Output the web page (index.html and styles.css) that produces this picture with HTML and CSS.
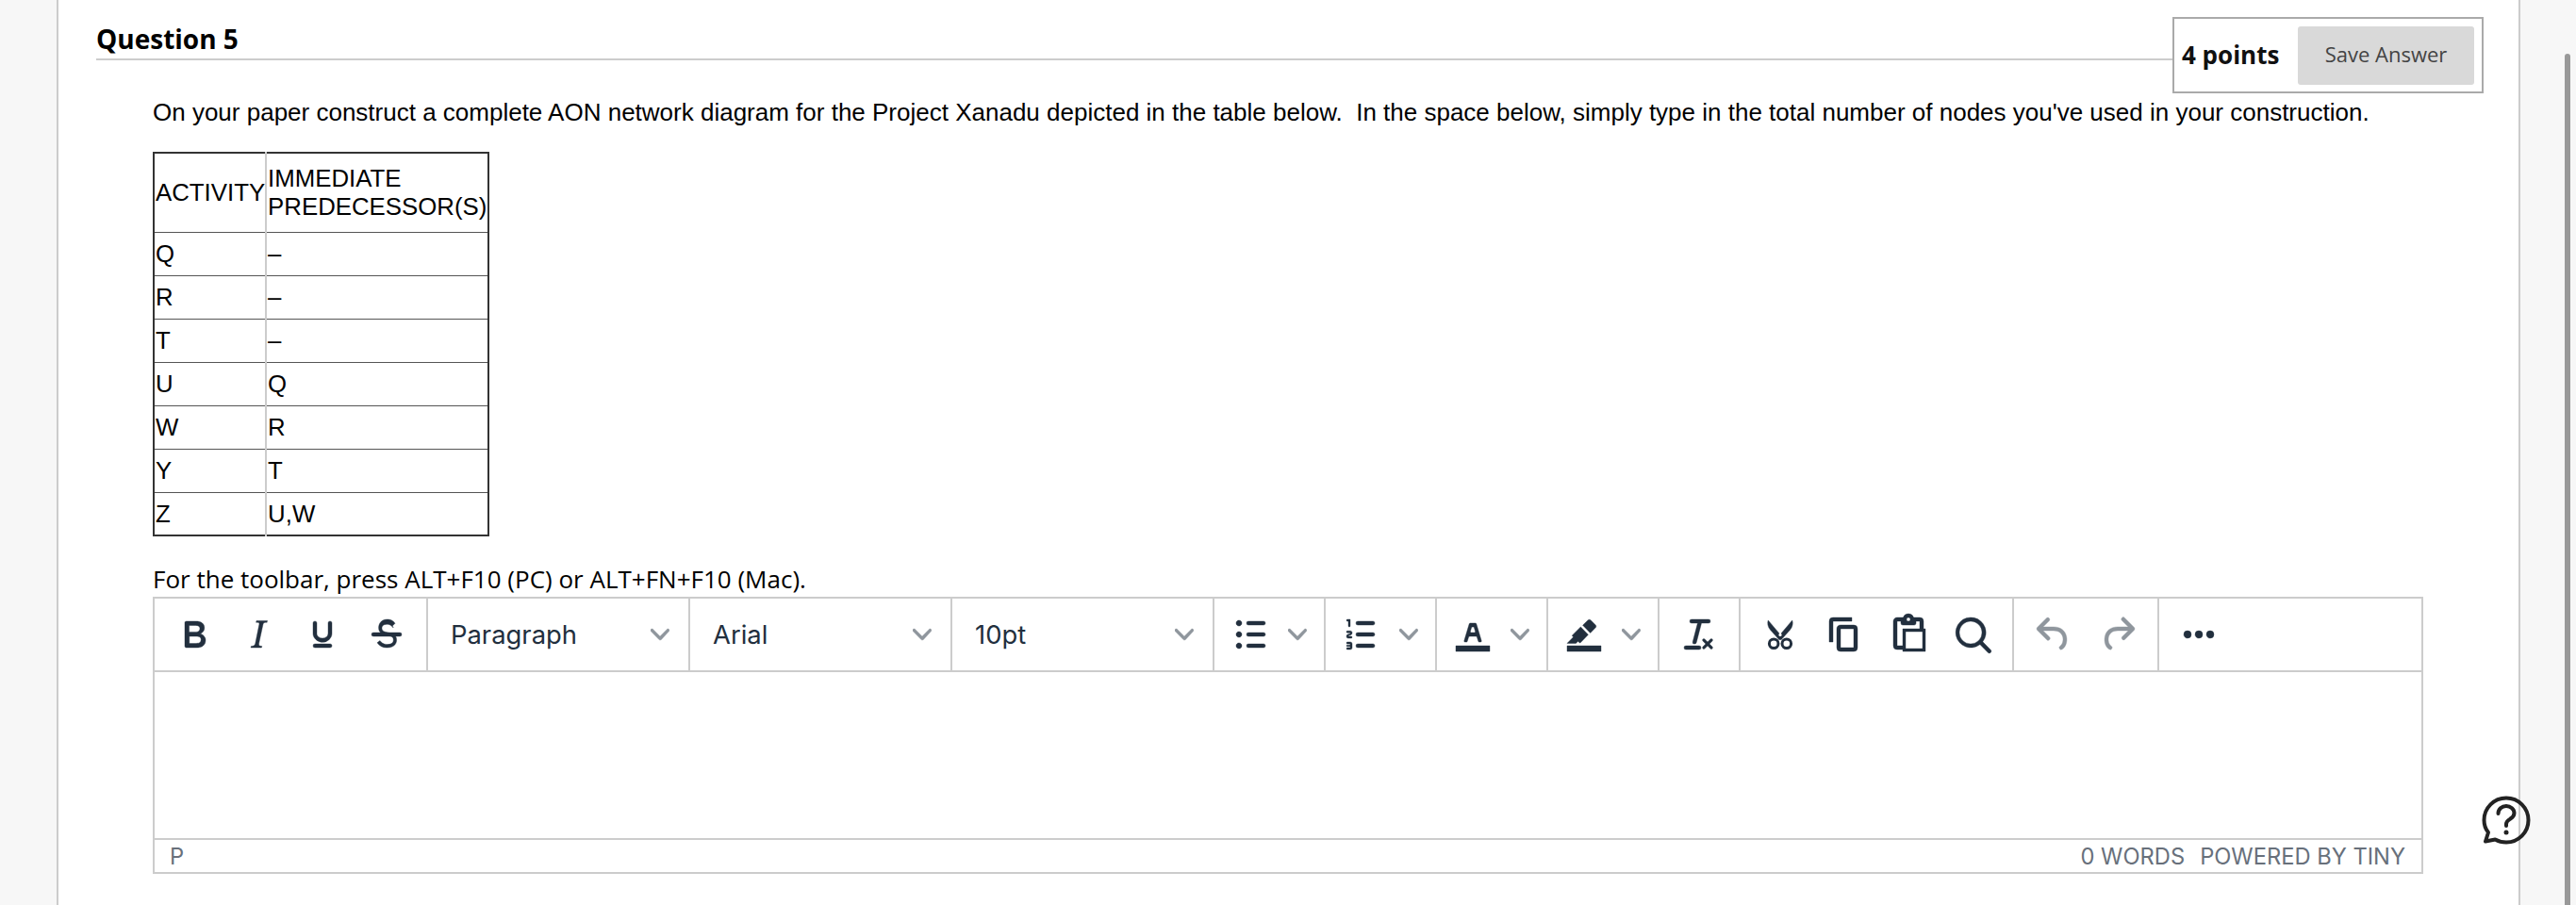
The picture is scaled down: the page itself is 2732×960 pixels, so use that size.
FILE: index.html
```html
<!DOCTYPE html>
<html lang="en">
<head>
<meta charset="utf-8">
<title>Question 5</title>
<link rel="stylesheet" href="styles.css">
</head>
<body>
<svg class="defs" width="0" height="0" aria-hidden="true">
  <defs>
    <path id="chev" d="M8.7 2.2c.3-.3.8-.3 1 0 .4.4.4.9 0 1.2L5.7 7.8c-.3.3-.9.3-1.2 0L.2 3.4a.8.8 0 0 1 0-1.2c.3-.3.8-.3 1.1 0L5 6l3.7-3.8z"/>
  </defs>
</svg>
<main class="page">
  <header class="q-head">
    <h2 class="q-title">Question 5</h2>
    <div class="points-box">
      <span class="points">4 points</span>
      <button class="save" type="button">Save Answer</button>
    </div>
  </header>
  <section class="q-body">
    <p class="prompt">On your paper construct a complete AON network diagram for the Project Xanadu depicted in the table below.&nbsp; In the space below, simply type in the total number of nodes you've used in your construction.</p>
    <table class="activity">
      <tr class="head"><td>ACTIVITY</td><td>IMMEDIATE<br>PREDECESSOR(S)</td></tr>
      <tr><td>Q</td><td>–</td></tr>
      <tr><td>R</td><td>–</td></tr>
      <tr><td>T</td><td>–</td></tr>
      <tr><td>U</td><td>Q</td></tr>
      <tr><td>W</td><td>R</td></tr>
      <tr><td>Y</td><td>T</td></tr>
      <tr><td>Z</td><td>U,W</td></tr>
    </table>
    <p class="hint">For the toolbar, press ALT+F10 (PC) or ALT+FN+F10 (Mac).</p>
    <div class="editor">
      <div class="toolbar">
        <div class="group">
          <span class="btn"><svg class="ico" viewBox="0 0 24 24"><path d="M7.8 19c-.3 0-.5 0-.6-.2l-.2-.5V5.7c0-.2 0-.4.2-.5l.6-.2h5c1.5 0 2.7.3 3.5 1 .7.6 1.1 1.4 1.1 2.5a3 3 0 0 1-.6 1.9c-.4.6-1 1-1.6 1.2.4.1.9.3 1.3.6s.8.7 1 1.2c.4.4.5 1 .5 1.6 0 1.3-.4 2.3-1.3 3-.8.7-2.1 1-3.8 1H7.8zm5-8.3c.6 0 1.2-.1 1.6-.5.4-.3.6-.7.6-1.3 0-1.1-.8-1.7-2.3-1.7H9.3v3.5h3.4zm.5 6c.7 0 1.3-.1 1.7-.4.4-.4.6-.9.6-1.5s-.2-1-.7-1.4c-.4-.3-1-.4-2-.4H9.4v3.8h4z"/></svg></span>
          <span class="btn"><svg class="ico" viewBox="0 0 24 24"><path d="M16.7 4.7l-.1.9h-.3c-.6 0-1 0-1.4.3-.3.3-.4.6-.5 1.1l-2.1 9.8v.6c0 .5.4.8 1.4.8h.2l-.2.8H8l.2-.8h.2c1.1 0 1.8-.5 2-1.5l2-9.8.1-.5c0-.6-.4-.8-1.4-.8h-.3l.2-.9h5.8z"/></svg></span>
          <span class="btn"><svg class="ico" viewBox="0 0 24 24"><path d="M16 5c.6 0 1 .4 1 1v5.5a4 4 0 0 1-.4 1.8l-1 1.4a5.3 5.3 0 0 1-5.5 1 5 5 0 0 1-1.6-1c-.5-.4-.8-.9-1.1-1.4a4 4 0 0 1-.4-1.8V6c0-.6.4-1 1-1s1 .4 1 1v5.5c0 .3 0 .6.2 1l.6.7a3.3 3.3 0 0 0 2.2.8 3.4 3.4 0 0 0 2.2-.8c.3-.2.4-.5.6-.8l.2-.9V6c0-.6.4-1 1-1zM8 17h8c.6 0 1 .4 1 1s-.4 1-1 1H8a1 1 0 0 1 0-2z"/></svg></span>
          <span class="btn"><svg class="ico" viewBox="0 0 24 24"><path d="M15.6 8.5c-.5-.7-1-1.1-1.3-1.3-.6-.4-1.3-.6-2-.6-2.7 0-2.8 1.7-2.8 2.1 0 1.6 1.8 2 3.2 2.3 4.4.9 4.6 2.8 4.6 3.9 0 1.4-.7 4.1-5 4.1A6.2 6.2 0 0 1 7 16.4l1.5-1.1c.4.6 1.6 2 3.7 2 1.6 0 2.5-.4 3-1 .3-.4.5-1 .4-1.6 0-1.3-1.1-1.8-3.3-2.2-2.1-.5-4.5-1.2-4.5-4 0-1.5.8-4.5 4.5-4.5 1 0 1.7.1 2.4.5.7.4 1.3.9 1.8 1.6l-1.4 1.4z"/><path d="M5 11h14a1 1 0 0 1 0 2H5a1 1 0 0 1 0-2z"/></svg></span>
        </div>
        <div class="select"><span class="select-label">Paragraph</span><svg class="chev" viewBox="0 0 10 10"><use href="#chev"/></svg></div>
        <div class="select"><span class="select-label">Arial</span><svg class="chev" viewBox="0 0 10 10"><use href="#chev"/></svg></div>
        <div class="select"><span class="select-label">10pt</span><svg class="chev" viewBox="0 0 10 10"><use href="#chev"/></svg></div>
        <div class="split">
          <svg class="ico" viewBox="0 0 24 24"><path d="M11 5h8c.6 0 1 .4 1 1s-.4 1-1 1h-8a1 1 0 0 1 0-2zm0 6h8c.6 0 1 .4 1 1s-.4 1-1 1h-8a1 1 0 0 1 0-2zm0 6h8c.6 0 1 .4 1 1s-.4 1-1 1h-8a1 1 0 0 1 0-2zM4.5 6c0-.4.1-.8.4-1 .3-.4.7-.5 1.1-.5s.8.1 1 .4c.4.3.5.7.5 1.1s-.1.8-.4 1c-.3.4-.7.5-1.1.5s-.8-.1-1-.4c-.4-.3-.5-.7-.5-1.1zm0 6c0-.4.1-.8.4-1 .3-.4.7-.5 1.1-.5s.8.1 1 .4c.4.3.5.7.5 1.1s-.1.8-.4 1c-.3.4-.7.5-1.1.5s-.8-.1-1-.4c-.4-.3-.5-.7-.5-1.1zm0 6c0-.4.1-.8.4-1 .3-.4.7-.5 1.1-.5s.8.1 1 .4c.4.3.5.7.5 1.1s-.1.8-.4 1c-.3.4-.7.5-1.1.5s-.8-.1-1-.4c-.4-.3-.5-.7-.5-1.1z"/></svg>
          <svg class="chev" viewBox="0 0 10 10"><use href="#chev"/></svg>
        </div>
        <div class="split">
          <svg class="ico" viewBox="0 0 24 24"><path d="M10 17h8c.6 0 1 .4 1 1s-.4 1-1 1h-8a1 1 0 0 1 0-2zm0-6h8c.6 0 1 .4 1 1s-.4 1-1 1h-8a1 1 0 0 1 0-2zm0-6h8c.6 0 1 .4 1 1s-.4 1-1 1h-8a1 1 0 1 1 0-2zM6 4v3.5c0 .3-.2.5-.5.5a.5.5 0 0 1-.5-.5V5h-.5a.5.5 0 0 1 0-1H6zm-1 8.8l.2.2h1.3c.3 0 .5.2.5.5s-.2.5-.5.5H4.9a1 1 0 0 1-.9-1V13c0-.4.3-.8.6-1l1.2-.4.2-.3a.2.2 0 0 0-.2-.2H4.5a.5.5 0 0 1-.5-.5c0-.3.2-.5.5-.5h1.6c.5 0 .9.4.9 1v.1c0 .4-.3.8-.6 1l-1.2.4-.2.3zM7 17v2c0 .6-.4 1-1 1H4.5a.5.5 0 0 1 0-1h1.2c.2 0 .3-.1.3-.3 0-.2-.1-.3-.3-.3H4.4a.4.4 0 1 1 0-.8h1.3c.2 0 .3-.1.3-.3 0-.2-.1-.3-.3-.3H4.5a.5.5 0 1 1 0-1H6c.6 0 1 .4 1 1z"/></svg>
          <svg class="chev" viewBox="0 0 10 10"><use href="#chev"/></svg>
        </div>
        <div class="split">
          <svg class="ico" viewBox="0 0 24 24"><path d="M3 18h18v3H3z"/><path d="M8.7 16h-.8a.5.5 0 0 1-.5-.6l2.7-9c.1-.3.3-.4.5-.4h2.8c.2 0 .4.1.5.4l2.7 9a.5.5 0 0 1-.5.6h-.8a.5.5 0 0 1-.4-.4l-.7-2.2c0-.3-.3-.4-.5-.4h-3.4c-.2 0-.4.1-.5.4l-.7 2.2c0 .3-.2.4-.4.4zm2.6-7.6l-.6 2a.5.5 0 0 0 .5.6h1.6a.5.5 0 0 0 .5-.6l-.6-2c0-.3-.3-.4-.5-.4h-.4c-.2 0-.4.1-.5.4z"/></svg>
          <svg class="chev" viewBox="0 0 10 10"><use href="#chev"/></svg>
        </div>
        <div class="split">
          <svg class="ico" viewBox="0 0 24 24"><path d="M3 18h18v3H3z"/><path d="M7.7 16.7H3l3.3-3.3-.7-.8L10.2 8l4 4.1-4 4.2c-.2.2-.6.2-.8 0l-.6-.7-1.1 1.1z"/><path d="M11.3 7.1l4 4.1 2.8-2.8c.4-.4.4-1 0-1.4l-2.6-2.6c-.4-.4-1-.4-1.4 0z"/></svg>
          <svg class="chev" viewBox="0 0 10 10"><use href="#chev"/></svg>
        </div>
        <div class="group">
          <span class="btn"><svg class="ico" viewBox="0 0 24 24"><path d="M13.2 6a1 1 0 0 1 0 .2l-2.6 10a1 1 0 0 1-1 .8h-.2a.8.8 0 0 1-.8-1l2.6-10H8a1 1 0 1 1 0-2h9a1 1 0 0 1 0 2h-3.8zM5 18h7a1 1 0 0 1 0 2H5a1 1 0 0 1 0-2zm13 1.5L16.5 18 15 19.5a.7.7 0 0 1-1-1l1.5-1.5-1.5-1.5a.7.7 0 0 1 1-1l1.5 1.5 1.5-1.5a.7.7 0 0 1 1 1L17.5 17l1.5 1.5a.7.7 0 0 1-1 1z"/></svg></span>
        </div>
        <div class="group">
          <span class="btn"><svg class="ico" viewBox="0 0 24 24"><path d="M5.6 4.5L13 13.2l-1.4 1.8L6.8 9.6C5.4 8 5.1 6 5.6 4.5z"/><path d="M18.4 4.5L11 13.2l1.4 1.8 4.8-5.4c1.4-1.6 1.7-3.6 1.2-5.1z"/><circle class="ring" cx="8.6" cy="16.9" r="2.4"/><circle class="ring" cx="15.4" cy="16.9" r="2.4"/><circle class="hole" cx="12" cy="12.2" r=".8"/></svg></span>
          <span class="btn"><svg class="ico" viewBox="0 0 24 24"><path d="M16 3H6a2 2 0 0 0-2 2v11h2V5h10V3zm1 4a2 2 0 0 1 2 2v10a2 2 0 0 1-2 2h-7a2 2 0 0 1-2-2V9c0-1.2.9-2 2-2h7zm0 12V9h-7v10h7z"/></svg></span>
          <span class="btn"><svg class="ico" viewBox="0 0 24 24"><path d="M18 9V5h-2v1c0 .6-.4 1-1 1H9a1 1 0 0 1-1-1V5H6v13h3V9h9zM9 20H6a2 2 0 0 1-2-2V5c0-1.1.9-2 2-2h3.2A3 3 0 0 1 12 1a3 3 0 0 1 2.8 2H18a2 2 0 0 1 2 2v4h1v12H9v-1zm1.5-9.5v9h9v-9h-9zM12 3a1 1 0 0 0-1 1c0 .5.4 1 1 1s1-.5 1-1-.4-1-1-1z" fill-rule="evenodd"/></svg></span>
          <span class="btn"><svg class="ico" viewBox="0 0 24 24"><path d="M16 17.3a8 8 0 1 1 1.4-1.4l4.3 4.4a1 1 0 0 1-1.4 1.4l-4.4-4.4zm-5-.3a6 6 0 1 0 0-12 6 6 0 0 0 0 12z"/></svg></span>
        </div>
        <div class="group muted">
          <span class="btn"><svg class="ico" viewBox="0 0 24 24"><path d="M6.4 8H12c3.7 0 6.2 2 6.8 5.1.6 2.7-.4 5.6-2.3 6.8a1 1 0 0 1-1-1.8c1.1-.6 1.8-2.7 1.4-4.6-.5-2.1-2.1-3.5-4.9-3.5H6.4l3.3 3.3a1 1 0 1 1-1.4 1.4l-5-5a1 1 0 0 1 0-1.4l5-5a1 1 0 0 1 1.4 1.4L6.4 8z"/></svg></span>
          <span class="btn"><svg class="ico" viewBox="0 0 24 24"><path d="M17.6 10H12c-2.8 0-4.4 1.4-4.9 3.5-.4 2 .3 4 1.4 4.6a1 1 0 1 1-1 1.8c-2-1.2-2.9-4.1-2.3-6.8.6-3 3-5.1 6.8-5.1h5.6l-3.3-3.3a1 1 0 1 1 1.4-1.4l5 5a1 1 0 0 1 0 1.4l-5 5a1 1 0 0 1-1.4-1.4l3.3-3.3z"/></svg></span>
        </div>
        <div class="group last">
          <span class="btn"><svg class="ico" viewBox="0 0 24 24"><path d="M6 10a2 2 0 0 0-2 2c0 1.1.9 2 2 2a2 2 0 0 0 2-2 2 2 0 0 0-2-2zm12 0a2 2 0 0 0-2 2c0 1.1.9 2 2 2a2 2 0 0 0 2-2 2 2 0 0 0-2-2zm-6 0a2 2 0 0 0-2 2c0 1.1.9 2 2 2a2 2 0 0 0 2-2 2 2 0 0 0-2-2z"/></svg></span>
        </div>
      </div>
      <div class="edit-area"></div>
      <div class="status">
        <span>P</span>
        <span class="status-right"><span>0 words</span><span>Powered by Tiny</span></span>
      </div>
    </div>
  </section>
</main>
<svg class="help" viewBox="0 0 52 52" aria-hidden="true">
  <path class="help-line" d="M7 41C3.6 37 2.5 32.5 2.5 28 2.5 15 13 4.5 26 4.5S49.5 15 49.5 28 39 51.5 26 51.5c-4.3 0-8.2-1-11.7-3L4 50.5z"/>
  <path class="help-line" d="M17.5 21c0-4.5 3.8-8 8.5-8s8.5 3.2 8.5 7.5c0 3.3-2.4 5-4.4 6.3-2.1 1.3-4.1 2.5-4.1 5.2v2"/>
  <circle class="help-dot" cx="26" cy="41" r="2.5"/>
</svg>
<div class="thumb"></div>
</body>
</html>
```

FILE: styles.css
```css
* { box-sizing: border-box; }
html, body { margin: 0; height: 960px; overflow: hidden; }
body { background: #f7f7f7; font-family: "Open Sans", sans-serif; color: #000; }
.defs { position: absolute; }
.page {
  margin: 0 59px 0 60px;
  height: 960px;
  background: #fff;
  border-left: 2px solid #ccc;
  border-right: 2px solid #ccc;
  padding: 0 37px 0 40px;
}
.q-head { display: flex; align-items: flex-start; }
.q-title {
  flex: 1;
  margin: 0;
  height: 64px;
  padding-top: 22px;
  font-size: 28px;
  line-height: 38px;
  font-weight: 700;
  border-bottom: 2px solid #ccc;
}
.points-box {
  margin-top: 18px;
  width: 330px;
  height: 81px;
  border: 2px solid #aaa;
  display: flex;
  align-items: center;
  justify-content: space-between;
  padding: 0 8px;
  background: #fff;
}
.points { font-size: 26px; font-weight: 700; color: #111; padding-bottom: 2px; }
.save {
  width: 187px;
  height: 62px;
  border: 0;
  border-radius: 3px;
  padding: 0 0 3px;
  background: #d9d9d9;
  color: #444;
  font: 400 22px "Open Sans", sans-serif;
}
.q-body { margin-top: 2px; padding-left: 60px; }
.prompt {
  margin: 0;
  font: 400 26px/36px "Liberation Sans", Arial, sans-serif;
  white-space: nowrap;
}
.activity {
  margin-top: 24px;
  border-collapse: collapse;
  font: 400 25.8px/30px "Liberation Sans", Arial, sans-serif;
  border: 2px solid #333;
}
.activity td {
  padding: 0 0 0 1px;
  height: 46px;
  border-top: 1px solid #555;
  border-bottom: 1px solid #555;
  vertical-align: middle;
}
.activity td:first-child { width: 118px; border-right: 2px solid #ccc; }
.activity td:last-child { width: 236px; }
.activity .head td { height: 84px; }
.hint { margin: 28px 0 0; font-size: 26px; line-height: 34px; white-space: nowrap; }
.editor {
  width: 2408px;
  border: 2px solid #ccc;
  background: #fff;
  margin-top: 2px;
}
.toolbar { display: flex; height: 76px; }
.group { display: flex; align-items: center; padding: 0 8px; border-right: 2px solid #ccc; }
.group.last { border-right: 0; }
.btn { width: 68px; height: 68px; display: flex; align-items: center; justify-content: center; }
.ico { width: 48px; height: 48px; fill: #222f3e; stroke: #222f3e; stroke-width: .2; flex: none; }
.ring { fill: none; stroke: #222f3e; stroke-width: 1.5; }
.hole { fill: #fff; stroke: none; }
.muted .ico { opacity: .5; }
.chev { width: 20px; height: 20px; fill: #222f3e; stroke: #222f3e; stroke-width: .15; opacity: .5; flex: none; }
.select {
  width: 278px;
  display: flex;
  align-items: center;
  justify-content: space-between;
  padding: 0 20px 0 24px;
  border-right: 2px solid #ccc;
}
.select-label { font-family: Inter, sans-serif; font-size: 27.4px; color: #222f3e; }
.split {
  width: 118px;
  display: flex;
  align-items: center;
  gap: 16px;
  padding-left: 14px;
  border-right: 2px solid #ccc;
}
.edit-area { height: 180px; border-top: 2px solid #ccc; border-bottom: 2px solid #ccc; }
.status {
  height: 34px;
  display: flex;
  align-items: center;
  justify-content: space-between;
  padding: 0 17px 0 16px;
  font-family: Inter, sans-serif;
  font-size: 23.7px;
  color: #68707b;
}
.status-right { display: flex; gap: 16px; text-transform: uppercase; }
.help { position: absolute; left: 2632px; top: 842px; width: 52px; height: 52px; overflow: visible; }
.help-line { fill: none; stroke: #222; stroke-width: 4; stroke-linejoin: round; stroke-linecap: round; }
.help-dot { fill: #222; }
.thumb { position: absolute; left: 2720px; top: 57px; width: 6px; height: 903px; background: #999; border-radius: 3px 3px 0 0; }
```
